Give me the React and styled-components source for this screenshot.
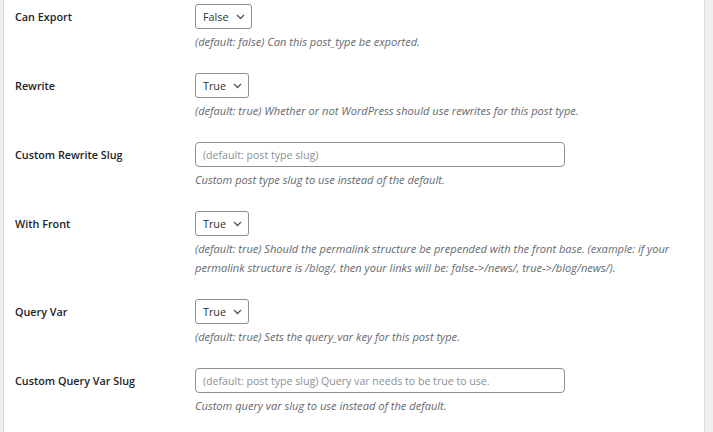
import React from "react";
import styled, { createGlobalStyle } from "styled-components";

const Global = createGlobalStyle`
  html, body { margin: 0; padding: 0; background: #f0f0f1; }
  body { font-family: "Open Sans", "Noto Sans", sans-serif; color: #1d2327; }
`;

const Panel = styled.div`
  margin-left: 3px;
  width: 702px;
  height: 432px;
  box-sizing: border-box;
  background: #ffffff;
  border-left: 1px solid #dcdcde;
  border-right: 1px solid #dcdcde;
  overflow: hidden;
`;

const Row = styled.div`
  display: grid;
  grid-template-columns: 180px 1fr;
  padding: 4px 0 18px 11px;
`;

const Label = styled.div`
  font-size: 10.8px;
  font-weight: 600;
  line-height: 25px;
  color: #1d2327;
`;

const Field = styled.div`
  display: flex;
  flex-direction: column;
  align-items: flex-start;
  gap: 3px;
`;

const SelectBox = styled.div`
  box-sizing: border-box;
  height: 25px;
  display: flex;
  align-items: center;
  gap: 7px;
  padding: 0 6px 0 7px;
  border: 1px solid #8c8f94;
  border-radius: 3px;
  font-size: 10.8px;
  color: #2c3338;
`;

const TextInput = styled.div`
  box-sizing: border-box;
  width: 370px;
  height: 25px;
  display: flex;
  align-items: center;
  padding: 0 7px;
  border: 1px solid #8c8f94;
  border-radius: 4px;
  font-size: 10.6px;
  color: #8c8f94;
`;

const Desc = styled.p`
  margin: 0;
  font-size: 11.1px;
  font-style: italic;
  line-height: 19px;
  color: #646970;
`;

const Chevron = () => (
  <svg width="9" height="6" viewBox="0 0 9 6" fill="none">
    <path d="M1 1l3.5 3.5L8 1" stroke="#50575e" strokeWidth="1.3" />
  </svg>
);

const rows = [
  { label: "Can Export", select: "False", desc: ["(default: false) Can this post_type be exported."] },
  { label: "Rewrite", select: "True", desc: ["(default: true) Whether or not WordPress should use rewrites for this post type."] },
  { label: "Custom Rewrite Slug", input: "(default: post type slug)", desc: ["Custom post type slug to use instead of the default."] },
  {
    label: "With Front",
    select: "True",
    desc: [
      "(default: true) Should the permalink structure be prepended with the front base. (example: if your",
      "permalink structure is /blog/, then your links will be: false->/news/, true->/blog/news/).",
    ],
  },
  { label: "Query Var", select: "True", desc: ["(default: true) Sets the query_var key for this post type."] },
  {
    label: "Custom Query Var Slug",
    input: "(default: post type slug) Query var needs to be true to use.",
    desc: ["Custom query var slug to use instead of the default."],
  },
];

export default function App() {
  return (
    <>
      <Global />
      <Panel>
        {rows.map((r) => (
          <Row key={r.label}>
            <Label>{r.label}</Label>
            <Field>
              {r.select ? (
                <SelectBox>
                  {r.select}
                  <Chevron />
                </SelectBox>
              ) : (
                <TextInput>{r.input}</TextInput>
              )}
              <Desc>
                {r.desc.map((d, i) => (
                  <React.Fragment key={i}>
                    {i > 0 && <br />}
                    {d}
                  </React.Fragment>
                ))}
              </Desc>
            </Field>
          </Row>
        ))}
      </Panel>
    </>
  );
}
